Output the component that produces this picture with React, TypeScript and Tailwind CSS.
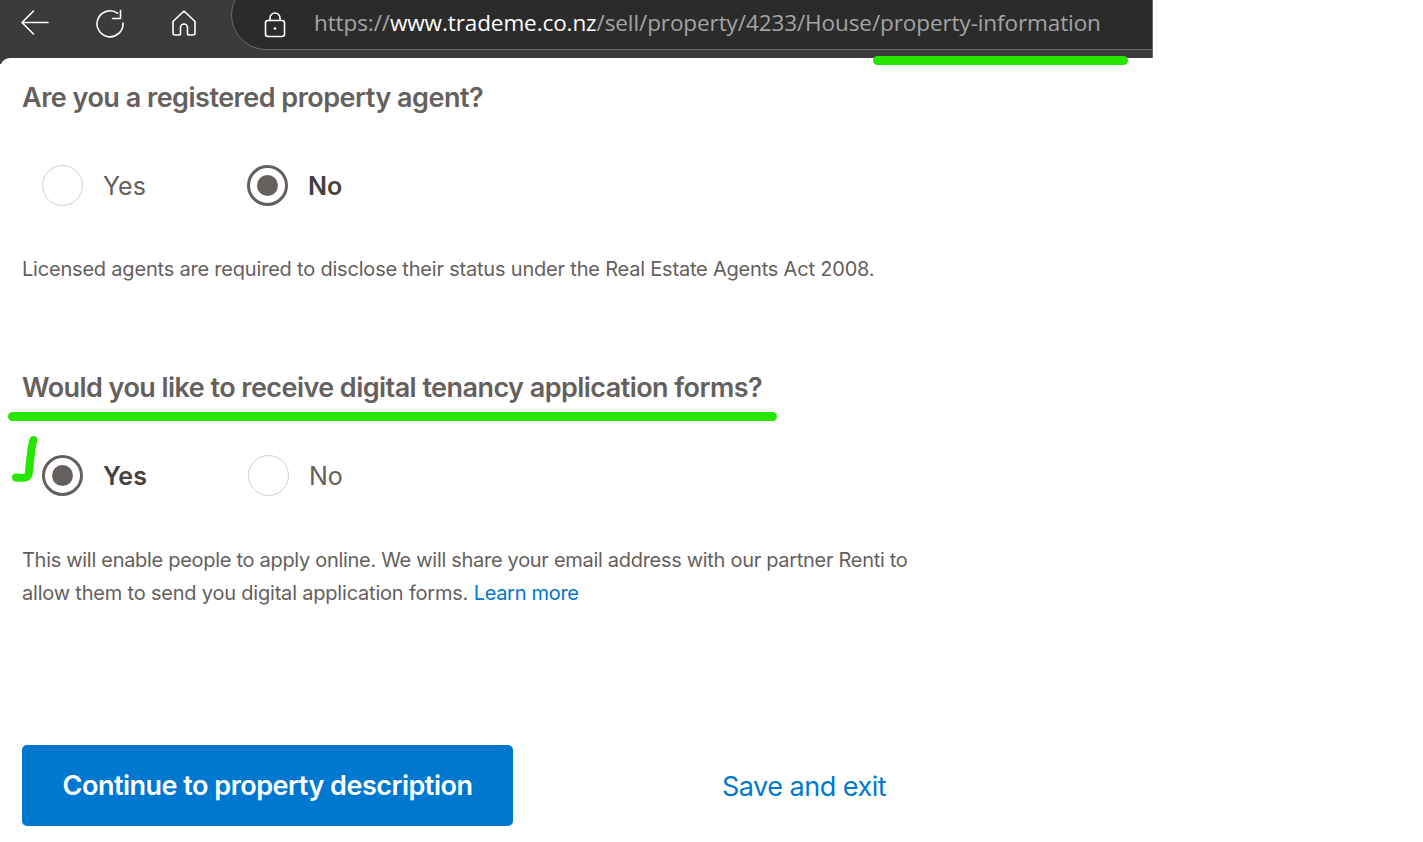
const sans = "font-['Inter',sans-serif]";

function Radio({ label, checked, width }: { label: string; checked?: boolean; width: string }) {
  return (
    <div className={`flex items-center ${width}`}>
      {checked ? (
        <span className="flex h-[41px] w-[41px] items-center justify-center rounded-full border-[3px] border-[#65605d] bg-white">
          <span className="h-[21px] w-[21px] rounded-full bg-[#65605d]" />
        </span>
      ) : (
        <span className="h-[41px] w-[41px] rounded-full border border-[#d0cfcd] bg-white" />
      )}
      <span className={`ml-5 pt-[2px] text-[25px] ${checked ? "font-semibold text-[#44413f]" : "text-[#65605d]"}`}>
        {label}
      </span>
    </div>
  );
}

export default function App() {
  return (
    <div className={`relative h-[842px] w-[1423px] overflow-hidden bg-white ${sans}`}>
      {/* browser chrome */}
      <div className="relative h-[64px] w-[1153px] overflow-hidden border-r border-[#6a6a6a] bg-[#3b3b3b] pl-[20px]">
        <div className="flex h-[46px] items-center">
          <svg className="h-[30px] w-[30px]" viewBox="0 0 30 30" fill="none" stroke="#fff" strokeWidth="1.6" strokeLinecap="round" strokeLinejoin="round">
            <path d="M2 22.5H28M13.5 11 2 22.5 13.5 34" transform="translate(0 -8)" />
          </svg>
          <svg className="ml-[45px] h-[30px] w-[30px]" viewBox="0 0 30 30" fill="none" stroke="#fff" strokeWidth="1.6" strokeLinecap="round" strokeLinejoin="round">
            <path d="M22.5 5.2A13 13 0 1 0 28 15" />
            <path d="M25.500 2.500V10.500H17.500" />
          </svg>
          <svg className="ml-[45px] h-[28px] w-[28px]" viewBox="0 0 28 28" fill="none" stroke="#fff" strokeWidth="1.6" strokeLinejoin="round">
            <path d="M14 2 3 12.5V24a2 2 0 0 0 2 2h4.500a1 1 0 0 0 1-1v-6.500a3.500 3.500 0 0 1 7 0V25a1 1 0 0 0 1 1H23a2 2 0 0 0 2-2V12.500Z" />
          </svg>
        </div>
        <div className="absolute left-[231px] top-[-20px] flex h-[70px] w-[922px] items-center rounded-l-[35px] border border-[#6a6a6a] bg-[#2b2b2b] pt-[20px]">
          <svg className="ml-[32px] h-[26px] w-[22px]" viewBox="0 0 22 26" fill="none" stroke="#fff" strokeWidth="1.6">
            <rect x="1.500" y="8.500" width="19" height="16" rx="2.500" />
            <path d="M6 8.500V6a5 5 0 0 1 10 0v2.500" />
            <circle cx="11" cy="16.500" r="1.300" fill="#fff" stroke="none" />
          </svg>
          <span className="ml-[28px] mt-[-4px] whitespace-nowrap font-['Open_Sans',sans-serif] text-[22.5px] tracking-[-0.1px] text-[#a3a3a3]">
            https://<span className="text-white">www.trademe.co.nz</span>/sell/property/4233/House/property-information
          </span>
        </div>
      </div>

      {/* page */}
      <div className="relative mt-[-6px] w-[1153px] rounded-tl-[10px] bg-white pl-[22px] text-[#65605d]">
        <h2 className="pt-[23px] text-[27px] leading-[34px] font-semibold tracking-[-0.5px]">Are you a registered property agent?</h2>
        <div className="mt-[50px] flex pl-[20px]">
          <Radio label="Yes" width="w-[205px]" />
          <Radio label="No" checked width="w-[200px]" />
        </div>
        <p className="mt-[47px] text-[20px] leading-[33px] tracking-[-0.2px]">
          Licensed agents are required to disclose their status under the Real Estate Agents Act 2008.
        </p>
        <h2 className="mt-[85px] text-[27px] leading-[34px] font-semibold tracking-[-0.55px]">
          Would you like to receive digital tenancy application forms?
        </h2>
        <div className="mt-[50px] flex pl-[20px]">
          <Radio label="Yes" checked width="w-[206px]" />
          <Radio label="No" width="w-[200px]" />
        </div>
        <p className="mt-[48px] w-[920px] text-[20px] leading-[33px]">
          <span className="block whitespace-nowrap tracking-[-0.3px]">
            This will enable people to apply online. We will share your email address with our partner Renti to
          </span>
          <span className="block whitespace-nowrap tracking-[-0.2px]">
            allow them to send you digital application forms.{" "}
            <span className="tracking-[-0.3px] text-[#0077cc]">Learn more</span>
          </span>
        </p>
        <div className="mt-[135px] flex items-center">
          <button className="h-[81px] w-[491px] rounded-[5px] bg-[#0078cf] pt-[2px] text-[27px] font-semibold tracking-[-0.5px] text-white">
            Continue to property description
          </button>
          <span className="ml-[209px] pt-[4px] text-[27px] tracking-[-0.5px] text-[#0078cf]">Save and exit</span>
        </div>
      </div>

      {/* green pen marks drawn over the screenshot */}
      <div className="absolute left-[873px] top-[56px] h-[9px] w-[255px] rounded-full bg-[#26e600]" />
      <div className="absolute left-[8px] top-[412px] h-[9px] w-[769px] rounded-full bg-[#26e600]" />
      <svg className="absolute left-[8px] top-[430px] h-[60px] w-[36px]" viewBox="0 0 36 60" fill="none" stroke="#26e600" strokeWidth="8" strokeLinecap="round" strokeLinejoin="round">
        <path d="M25.500 10C23 18 22 30 21 42C20.500 48 18 48.500 8 47.500" />
      </svg>
    </div>
  );
}
